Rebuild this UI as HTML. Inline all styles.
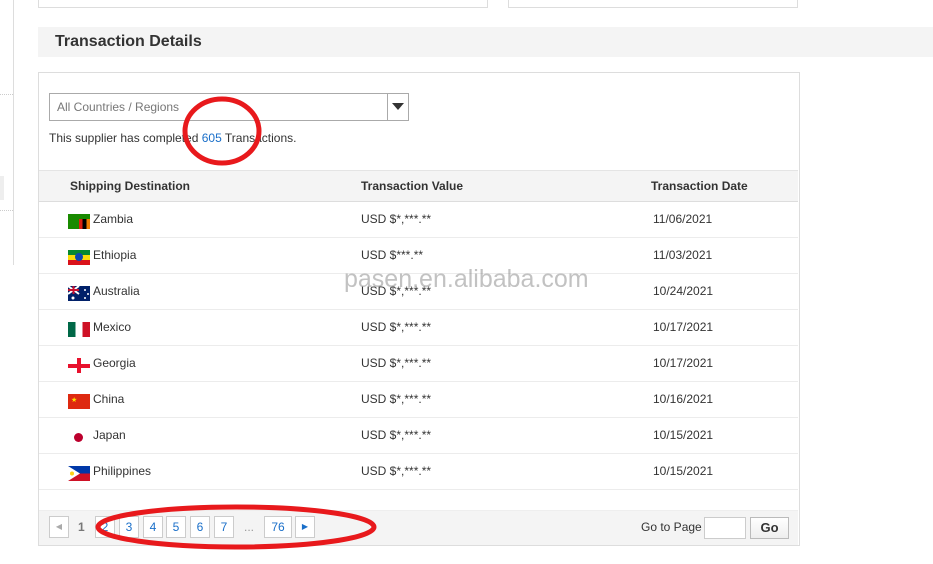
<!DOCTYPE html>
<html><head><meta charset="utf-8"><style>
*{margin:0;padding:0;box-sizing:border-box}
body{width:933px;height:564px;background:#fff;font-family:"Liberation Sans",Arial,sans-serif;font-size:12px;color:#333;position:relative;overflow:hidden}
.a{position:absolute}
.row{position:absolute;left:39px;width:759px;height:36px;border-bottom:1px solid #ececec}
.row span{position:absolute;top:10px}
.flag{position:absolute;left:29px;top:12px;width:22px;height:15px}
.pg{position:absolute;top:516px;height:22px;border:1px solid #ccc;background:#fff;color:#1a6fc9;text-align:center;line-height:20px;font-size:12px}
</style></head><body>
<div class="a" style="left:13px;top:0;width:1px;height:265px;background:#ddd"></div>
<div class="a" style="left:0;top:94px;width:13px;border-top:1px dotted #ccc"></div>
<div class="a" style="left:0;top:210px;width:13px;border-top:1px dotted #ccc"></div>
<div class="a" style="left:0;top:176px;width:4px;height:24px;background:#eee"></div>
<div class="a" style="left:38px;top:-2px;width:450px;height:10px;border:1px solid #ddd"></div>
<div class="a" style="left:508px;top:-2px;width:290px;height:10px;border:1px solid #ddd"></div>
<div class="a" style="left:38px;top:27px;width:895px;height:30px;background:#f4f4f4"></div>
<div class="a" style="left:55px;top:33px;font-size:16px;font-weight:bold;color:#333">Transaction Details</div>
<div class="a" style="left:38px;top:72px;width:762px;height:474px;border:1px solid #ddd"></div>
<div class="a" style="left:49px;top:93px;width:360px;height:28px;border:1px solid #aaa;background:#fff"></div>
<div class="a" style="left:387px;top:94px;width:1px;height:26px;background:#aaa"></div>
<div class="a" style="left:392px;top:103px;width:0;height:0;border-left:6px solid transparent;border-right:6px solid transparent;border-top:7px solid #333"></div>
<div class="a" style="left:57px;top:100px;color:#777">All Countries / Regions</div>
<div class="a" style="left:49px;top:131px">This supplier has completed <span style="color:#1a6fc9">605</span> Transactions.</div>
<div class="a" style="left:39px;top:170px;width:759px;height:32px;background:#f4f4f4;border-top:1px solid #e4e4e4;border-bottom:1px solid #ddd"></div>
<div class="a" style="left:70px;top:179px;font-weight:bold">Shipping Destination</div>
<div class="a" style="left:361px;top:179px;font-weight:bold">Transaction Value</div>
<div class="a" style="left:651px;top:179px;font-weight:bold">Transaction Date</div>

<div class="row" style="top:202px"><div class="flag" style="background:#198a00"><div class="a" style="left:11px;top:5px;width:11px;height:10px;background:linear-gradient(90deg,#de2010 33%,#000 33% 66%,#ef7d00 66%)"></div></div><span style="left:54px">Zambia</span><span style="left:322px">USD $*,***.**</span><span style="left:614px">11/06/2021</span></div>
<div class="row" style="top:238px"><div class="flag" style="background:linear-gradient(#078930 33%,#fcdd09 33% 66%,#da121a 66%)"><div class="a" style="left:7px;top:3px;width:8px;height:8px;border-radius:50%;background:#0f47af"></div></div><span style="left:54px">Ethiopia</span><span style="left:322px">USD $***.**</span><span style="left:614px">11/03/2021</span></div>
<div class="row" style="top:274px"><div class="flag" style="background:#012169"><svg width="22" height="15" class="a" style="left:0;top:0"><path d="M0 0L11 8M11 0L0 8" stroke="#fff" stroke-width="2"/><path d="M5.5 0V8M0 4H11" stroke="#c8102e" stroke-width="2"/><circle cx="5" cy="12" r="1.5" fill="#fff"/><circle cx="17" cy="4" r="1" fill="#fff"/><circle cx="17" cy="12" r="1" fill="#fff"/><circle cx="20" cy="8" r="1" fill="#fff"/></svg></div><span style="left:54px">Australia</span><span style="left:322px">USD $*,***.**</span><span style="left:614px">10/24/2021</span></div>
<div class="row" style="top:310px"><div class="flag" style="background:linear-gradient(90deg,#006847 33%,#fff 33% 66%,#ce1126 66%)"></div><span style="left:54px">Mexico</span><span style="left:322px">USD $*,***.**</span><span style="left:614px">10/17/2021</span></div>
<div class="row" style="top:346px"><div class="flag" style="background:#fff"><div class="a" style="left:9px;top:0;width:4px;height:15px;background:#e8112d"></div><div class="a" style="left:0;top:5.5px;width:22px;height:4px;background:#e8112d"></div></div><span style="left:54px">Georgia</span><span style="left:322px">USD $*,***.**</span><span style="left:614px">10/17/2021</span></div>
<div class="row" style="top:382px"><div class="flag" style="background:#de2910"><div class="a" style="left:3px;top:2px;color:#ffde00;font-size:7px">★</div></div><span style="left:54px">China</span><span style="left:322px">USD $*,***.**</span><span style="left:614px">10/16/2021</span></div>
<div class="row" style="top:418px"><div class="flag" style="background:#fff"><div class="a" style="left:6px;top:3px;width:9px;height:9px;border-radius:50%;background:#bc002d"></div></div><span style="left:54px">Japan</span><span style="left:322px">USD $*,***.**</span><span style="left:614px">10/15/2021</span></div>
<div class="row" style="top:454px"><div class="flag" style="background:linear-gradient(#0038a8 50%,#ce1126 50%)"><svg width="22" height="15" class="a" style="left:0;top:0"><path d="M0 0L12 7.5L0 15Z" fill="#fff"/><circle cx="4" cy="7.5" r="2" fill="#fcd116"/></svg></div><span style="left:54px">Philippines</span><span style="left:322px">USD $*,***.**</span><span style="left:614px">10/15/2021</span></div>

<div class="a" style="left:39px;top:510px;width:759px;height:35px;background:#f4f4f4;border-top:1px solid #eee"></div>
<div class="pg" style="left:49px;width:20px;color:#aaa;font-size:8px">◀</div>
<div class="a" style="left:78px;top:520px;color:#777;font-weight:bold">1</div>
<div class="pg" style="left:95px;width:20px">2</div>
<div class="pg" style="left:119px;width:20px">3</div>
<div class="pg" style="left:143px;width:20px">4</div>
<div class="pg" style="left:166px;width:20px">5</div>
<div class="pg" style="left:190px;width:20px">6</div>
<div class="pg" style="left:214px;width:20px">7</div>
<div class="a" style="left:244px;top:520px;color:#999">...</div>
<div class="pg" style="left:264px;width:28px">76</div>
<div class="pg" style="left:295px;width:20px;font-size:8px">▶</div>
<div class="a" style="left:641px;top:520px;color:#333">Go to Page</div>
<div class="a" style="left:704px;top:517px;width:42px;height:22px;border:1px solid #ccc;background:#fff"></div>
<div class="a" style="left:750px;top:517px;width:39px;height:22px;border:1px solid #bbb;background:linear-gradient(#fff,#eee);text-align:center;line-height:20px;font-weight:bold;font-size:13px">Go</div>

<div class="a" style="left:344px;top:265px;font-size:25px;color:rgba(120,120,120,.45)">pasen.en.alibaba.com</div>
<svg class="a" style="left:0;top:0" width="933" height="564"><ellipse cx="222" cy="131" rx="37" ry="32" fill="none" stroke="#e8191c" stroke-width="5"/><ellipse cx="236" cy="527" rx="138" ry="20" fill="none" stroke="#e8191c" stroke-width="5"/></svg>
</body></html>
